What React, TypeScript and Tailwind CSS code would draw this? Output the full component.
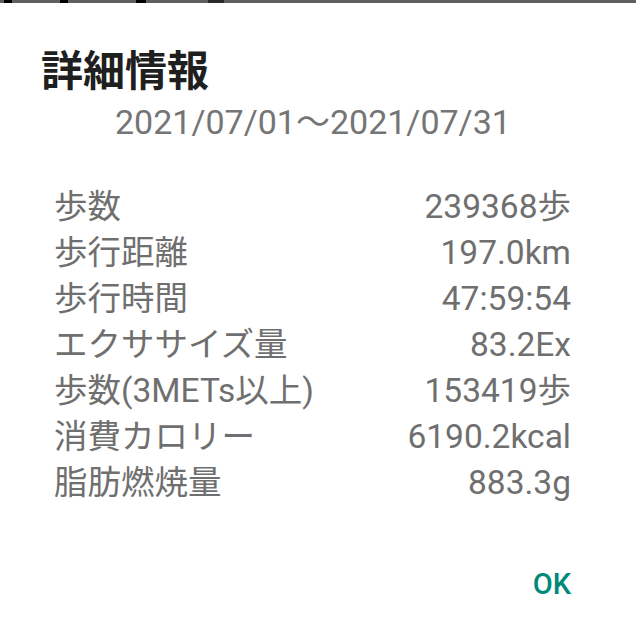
import React from 'react'

const rows: [string, string][] = [
  ['歩数', '239368歩'],
  ['歩行距離', '197.0km'],
  ['歩行時間', '47:59:54'],
  ['エクササイズ量', '83.2Ex'],
  ['歩数(3METs以上)', '153419歩'],
  ['消費カロリー', '6190.2kcal'],
  ['脂肪燃焼量', '883.3g'],
]

const App = () => {
  return (
    <div
      className="w-[636px] h-[640px] bg-white overflow-hidden"
      style={{ fontFamily: "Roboto, 'Noto Sans CJK JP', sans-serif" }}
    >
      {/* cut-off edge of the screen above the dialog */}
      <div className="h-[3px] bg-[#5f5f5f] flex">
        <div className="ml-[4px] w-[8px] bg-black" />
        <div className="ml-[48px] w-[8px] bg-black" />
        <div className="ml-[68px] w-[10px] bg-black" />
        <div className="ml-[62px] w-[16px] bg-[#2a2a2a]" />
      </div>

      <div className="pt-[42px] pl-[41px]">
        <div className="text-[42px] leading-[54px] font-bold text-[#1f1f1f]">詳細情報</div>
      </div>

      <div className="pl-[115px] pt-[1px] text-[34px] leading-[44px] text-[#757575]">
        2021/07/01〜2021/07/31
      </div>

      <div className="pt-[40px] pl-[54px] pr-[65px] flex flex-col">
        {rows.map(([label, value]) => (
          <div key={label} className="flex justify-between text-[33.5px] leading-[46px] text-[#6f6f6f]">
            <span>{label}</span>
            <span>{value}</span>
          </div>
        ))}
      </div>

      <div className="flex justify-end pr-[65px] pt-[60px]">
        <button className="text-[29px] leading-[36px] font-medium text-[#00897b]">OK</button>
      </div>
    </div>
  )
}

export default App
